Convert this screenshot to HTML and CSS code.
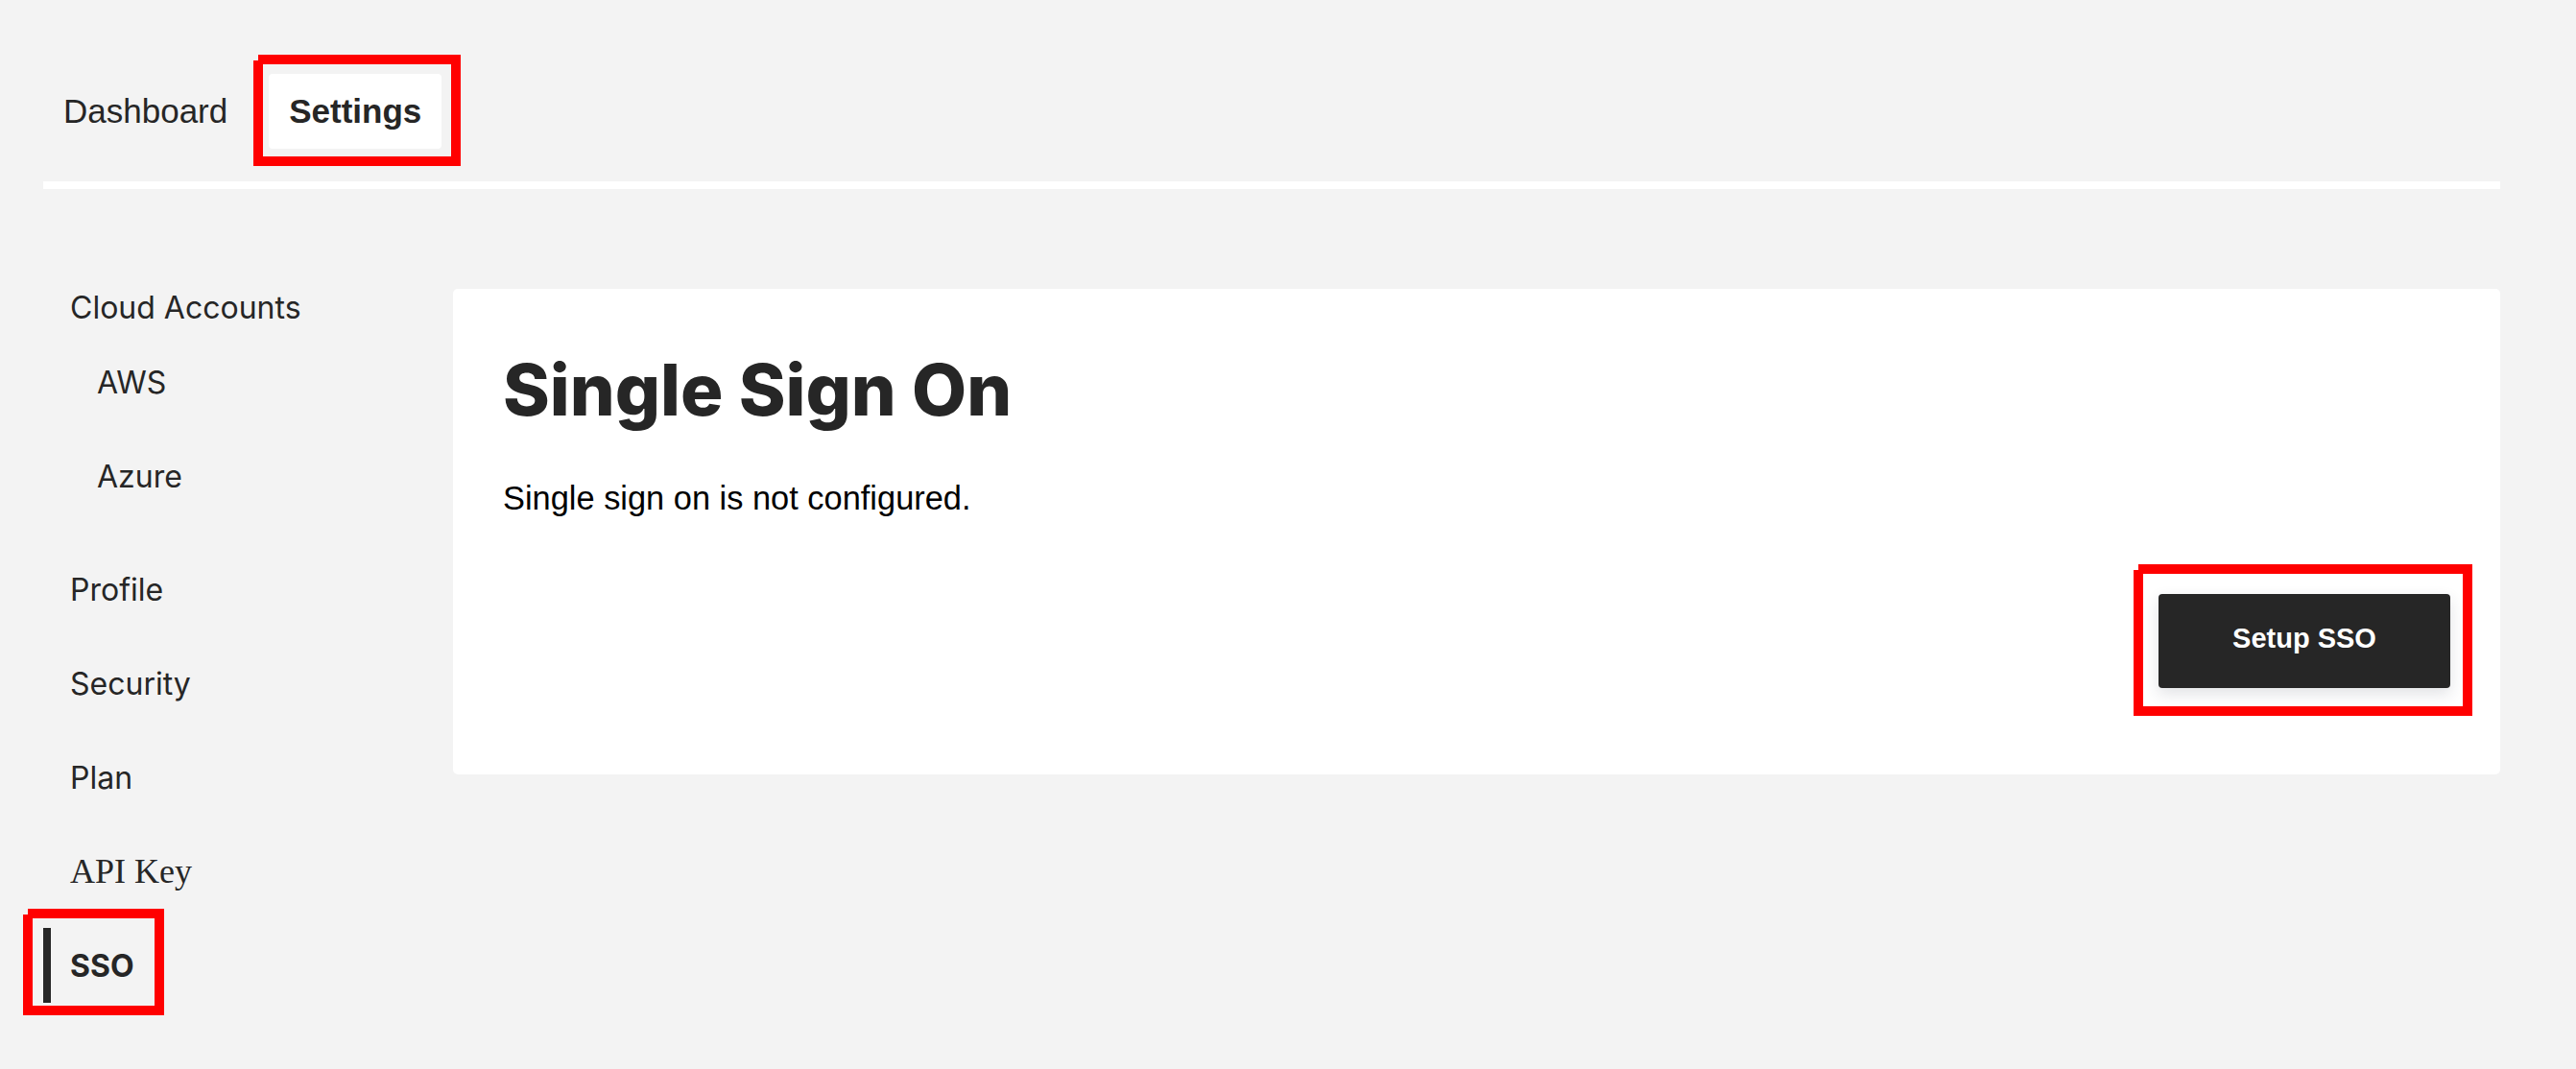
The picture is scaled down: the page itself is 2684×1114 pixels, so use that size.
FILE: index.html
```html
<!DOCTYPE html>
<html lang="en">
<head>
<meta charset="utf-8">
<title>Settings - SSO</title>
<link rel="stylesheet" href="styles.css">
</head>
<body>
<div class="page">
  <nav class="tabs">
    <a class="tab">Dashboard</a>
    <a class="tab tab-active hl hl-settings">Settings</a>
  </nav>
  <div class="rule"></div>
  <div class="layout">
    <aside class="sidenav">
      <div class="group">
        <div class="group-title">Cloud Accounts</div>
        <a class="item sub">AWS</a>
        <a class="item sub">Azure</a>
      </div>
      <a class="item">Profile</a>
      <a class="item">Security</a>
      <a class="item">Plan</a>
      <a class="item serif">API Key</a>
      <a class="item active hl hl-sso">SSO</a>
    </aside>
    <section class="card">
      <h1 class="title">Single Sign On</h1>
      <p class="desc">Single sign on is not configured.</p>
      <div class="actions">
        <button class="btn hl hl-btn hl-on-white">Setup SSO</button>
      </div>
    </section>
  </div>
</div>
</body>
</html>
```
FILE: styles.css
```css
html, body {
  margin: 0;
  padding: 0;
  background: #f3f3f3;
  color: #262626;
}
body {
  font-family: "Liberation Sans", Arial, sans-serif;
  min-height: 100vh;
}
.page {
  margin-left: 45px;
  width: 2560px;
  padding-top: 77px;
  padding-bottom: 69px;
}
.tabs {
  display: flex;
  gap: 22px;
}
.tab {
  display: flex;
  align-items: center;
  height: 78px;
  padding: 0 21px;
  font-family: "Liberation Sans", Arial, sans-serif;
  font-size: 35px;
  color: #262626;
  border-radius: 4px;
}
.tab-active {
  background: #ffffff;
  font-weight: 700;
}
.rule {
  margin-top: 34px;
  height: 8px;
  background: #ffffff;
}
.layout {
  margin-top: 104px;
  display: grid;
  grid-template-columns: 427px 1fr;
  align-items: start;
}
.sidenav {
  display: flex;
  flex-direction: column;
  align-items: flex-start;
  gap: 20px;
  font-family: Inter, "Noto Sans", sans-serif;
  font-size: 32px;
}
.group {
  display: flex;
  flex-direction: column;
  align-items: flex-start;
  gap: 20px;
  margin-bottom: 20px;
}
.group-title {
  height: 38px;
  display: flex;
  align-items: center;
  padding-left: 28px;
}
.item {
  height: 78px;
  display: flex;
  align-items: center;
  box-sizing: border-box;
  border-left: 8px solid transparent;
  padding-left: 20px;
  color: #262626;
}
.item.sub {
  padding-left: 48px;
}
.item.serif {
  font-family: "Liberation Serif", "Times New Roman", serif;
  font-size: 36px;
}
.item.active {
  border-left-color: #262626;
  font-weight: 700;
}
.card {
  background: #ffffff;
  border-radius: 5px;
  padding: 61px 52px 90px 52px;
}
.title {
  margin: 0;
  font-family: Inter, "Noto Sans", sans-serif;
  font-weight: 800;
  font-size: 74px;
  line-height: 89px;
  color: #262626;
}
.desc {
  margin: 49px 0 0 0;
  font-family: "Liberation Sans", Arial, sans-serif;
  font-size: 34.4px;
  line-height: 39px;
  color: #000000;
}
.actions {
  margin-top: 80px;
  display: flex;
  justify-content: flex-end;
}
.btn {
  width: 304px;
  height: 98px;
  border: none;
  border-radius: 4px;
  background: #262626;
  color: #ffffff;
  font-family: "Liberation Sans", Arial, sans-serif;
  font-weight: 700;
  font-size: 29px;
  padding: 0 0 6px 0;
  box-shadow: 0 6px 16px rgba(40, 50, 70, 0.14);
}
/* red annotation boxes */
.hl {
  position: relative;
}
.hl::after {
  content: "";
  position: absolute;
  border: 10px solid #ff0000;
  pointer-events: none;
}
.hl::before {
  content: "";
  position: absolute;
  width: 5px;
  height: 6px;
  background: #f3f3f3;
  z-index: 1;
  pointer-events: none;
}
.hl-on-white::before {
  background: #ffffff;
}
.hl-settings::after {
  left: -16px;
  right: -20px;
  top: -20px;
  bottom: -18px;
}
.hl-settings::before {
  left: -16px;
  top: -20px;
}
.hl-sso::after {
  left: -29px;
  right: -31px;
  top: -20px;
  bottom: -13px;
}
.hl-sso::before {
  left: -29px;
  top: -20px;
}
.hl-btn::after {
  left: -26px;
  right: -23px;
  top: -31px;
  bottom: -29px;
}
.hl-btn::before {
  left: -26px;
  top: -31px;
}
```
